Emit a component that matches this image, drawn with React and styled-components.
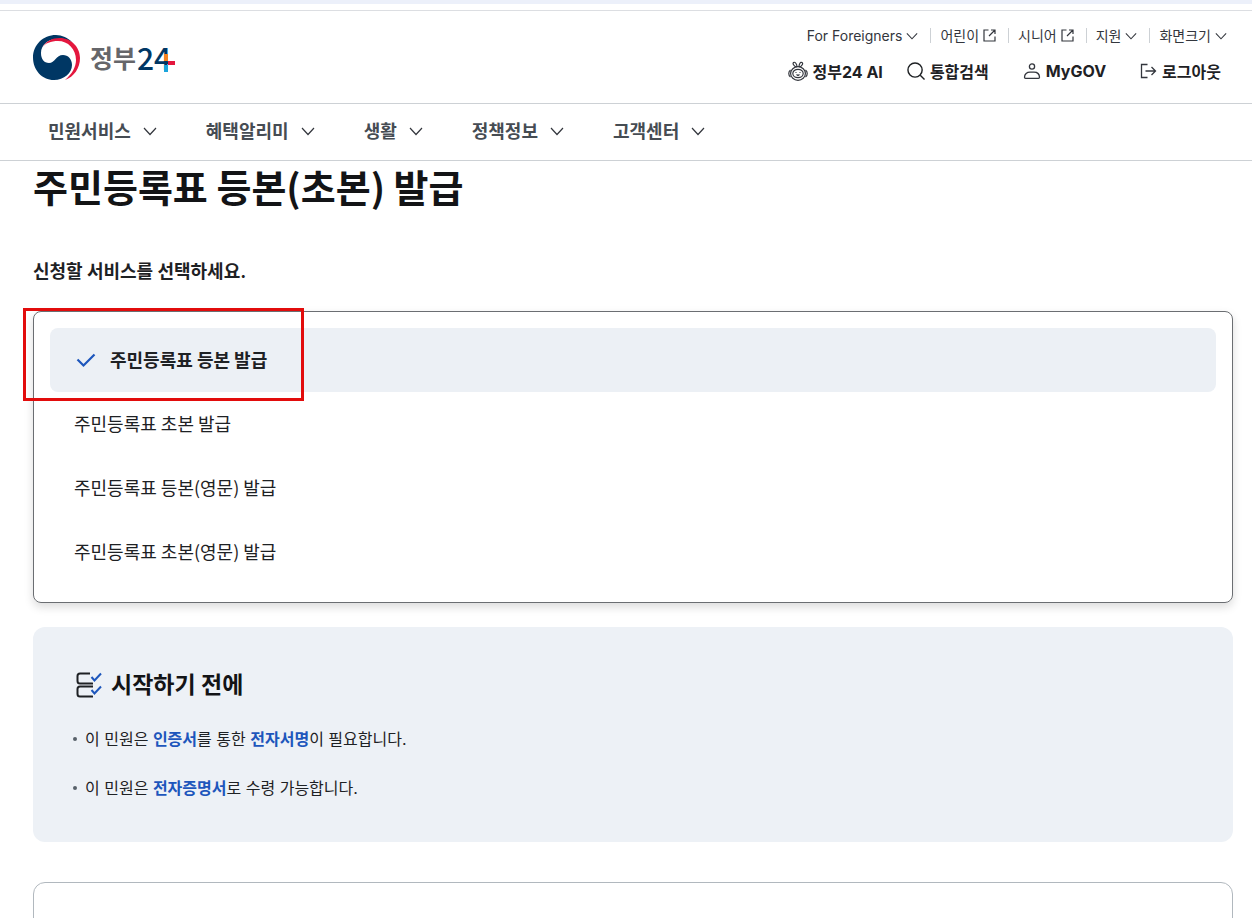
import { useState } from "react";
import styled, { createGlobalStyle } from "styled-components";

const GlobalStyle = createGlobalStyle`
  *, *::before, *::after {
    box-sizing: border-box;
  }
  body {
    margin: 0;
    background: #fff;
    color: #1e2124;
    font-family: "Inter", "Noto Sans CJK KR", sans-serif;
    font-size: 16px;
  }
  button {
    font: inherit;
    color: inherit;
    background: none;
    border: 0;
    padding: 0;
    cursor: pointer;
  }
  a {
    color: inherit;
    text-decoration: none;
  }
  ul {
    list-style: none;
    margin: 0;
    padding: 0;
  }
  svg {
    display: block;
    flex: none;
  }
`;

const Page = styled.div`
  height: 100vh;
  overflow: hidden;
`;

const TopStrip = styled.div`
  height: 11px;
  border-top: 4px solid #ecf0fa;
  border-bottom: 1px solid #dcdee2;
`;

const Header = styled.header`
  display: flex;
  justify-content: space-between;
  height: 93px;
  padding: 0 25px 0 33px;
  border-bottom: 1px solid #cdd1d5;
`;

const LogoLink = styled.a`
  display: flex;
  align-items: center;
  padding-top: 2px;
`;

const HeaderMenus = styled.div`
  display: flex;
  flex-direction: column;
  align-items: flex-end;
  gap: 12px;
  padding-top: 13px;
`;

const UtilList = styled.ul`
  display: flex;
  align-items: center;
`;

const UtilItem = styled.li`
  display: flex;
  align-items: center;

  & + &::before {
    content: "";
    width: 1px;
    height: 15px;
    margin: 0 9px 0 12px;
    background: #cdd1d5;
  }
`;

const UtilButton = styled.button`
  display: flex;
  align-items: center;
  gap: 4px;
  height: 22px;
  font-size: 14px;
  color: #33363d;
`;

const MainList = styled.ul`
  display: flex;
  padding-right: 6px;
`;

const MainItem = styled.li`
  margin-left: ${({ $tight }) => ($tight ? 24 : 34)}px;
`;

const MainButton = styled.button`
  display: flex;
  align-items: center;
  gap: 5px;
  height: 26px;
  font-size: 16px;
  font-weight: 700;
`;

const Nav = styled.nav`
  height: 57px;
  padding: 0 48px;
  border-bottom: 1px solid #cdd1d5;
`;

const NavList = styled.ul`
  display: flex;
  gap: 49px;
`;

const NavButton = styled.button`
  display: flex;
  align-items: center;
  gap: 12px;
  height: 52px;
  font-size: 18px;
  font-weight: 700;
  color: #464c53;
`;

const Main = styled.main`
  padding: 0 19px 0 33px;
`;

const Title = styled.h1`
  margin: 0;
  font-family: "Noto Sans CJK KR", sans-serif;
  font-size: 38px;
  line-height: 50px;
  font-weight: 700;
  color: #131416;
`;

const Question = styled.h2`
  margin: 47px 0 25px;
  font-size: 18px;
  line-height: 28px;
  font-weight: 700;
`;

const SelectBox = styled.div`
  position: relative;
  padding: 16px 16px 18px;
  border: 1px solid #6b6e72;
  border-radius: 8px;
  box-shadow: 0 4px 10px rgba(0, 0, 0, 0.14);
`;

const Highlight = styled.div`
  position: absolute;
  top: -4px;
  left: -11px;
  width: 281px;
  height: 93px;
  border: 3px solid #e20c0c;
  pointer-events: none;
`;

const Option = styled.button`
  display: flex;
  align-items: center;
  gap: 12px;
  width: 100%;
  height: 64px;
  padding: 0 24px 2px;
  border-radius: 8px;
  font-family: "Noto Sans CJK KR", sans-serif;
  font-size: 18px;
  text-align: left;
  font-weight: ${({ $selected }) => ($selected ? 700 : 400)};
  background: ${({ $selected }) => ($selected ? "#ecf0f5" : "transparent")};
`;

const InfoBox = styled.section`
  margin-top: 24px;
  padding: 41px 40px;
  border-radius: 12px;
  background: #edf1f6;
`;

const InfoTitle = styled.h2`
  display: flex;
  align-items: center;
  gap: 8px;
  margin: 0 0 24px;
  font-size: 23px;
  line-height: 34px;
  font-weight: 700;
  color: #131416;
`;

const InfoList = styled.ul`
  display: flex;
  flex-direction: column;
  gap: 23px;
`;

const InfoItem = styled.li`
  display: flex;
  align-items: center;
  gap: 8px;
  line-height: 26px;

  &::before {
    content: "";
    width: 4px;
    height: 4px;
    border-radius: 50%;
    background: #58616a;
  }
`;

const Strong = styled.strong`
  font-weight: 700;
  color: #1d56bc;
`;

const NextCard = styled.section`
  height: 160px;
  margin-top: 40px;
  border: 1px solid #b1b8be;
  border-radius: 12px;
`;

const Logo = () => (
  <svg width="144" height="48" viewBox="0 0 144 48" role="img" aria-label="정부24">
    <path
      d="M39 8C35 4 29 1 23 1C10 1 0 11 0 23.500C0 36 9 46 21 46C31 46 39 39 39 31C39 25 35 21 30 21C23 21 22 29 16 29C11 29 8 25 8 19C8 11 15 5 24 5C30 5 35 6 39 8Z"
      fill="#003764"
    />
    <path
      d="M9 14C13 7 19 4 27 4C38 4 47 13 47 24C47 34 41 43 32 46C39 40 43 33 43 26C43 15 35 7 25 7C18 7 12 9 9 14Z"
      fill="#e4173e"
    />
    <text x="57" y="34" fontFamily="Noto Sans CJK KR" fontSize="25" fontWeight="700" fill="#65666a">정부</text>
    <text x="104" y="36" fontFamily="Noto Sans CJK KR" fontSize="30" fontWeight="500" fill="#003764">24</text>
    <path d="M131 20H135V27H131Z" fill="#f5821f" />
    <path d="M135 27H142V31H135Z" fill="#e4173e" />
    <path d="M131 31H135V38H131Z" fill="#1ba5dc" />
  </svg>
);

const Chevron = ({ size = 12, stroke = "#33363d" }) => (
  <svg width={size} height={size} viewBox="0 0 14 14" fill="none" stroke={stroke} strokeWidth="1.200">
    <path d="M1 5L7 11.500L13 5" />
  </svg>
);

const ExternalIcon = () => (
  <svg width="13" height="13" viewBox="0 0 13 13" fill="none" stroke="#33363d" strokeWidth="1.200">
    <path d="M5.500 1H1V12H12V7.500M8 1H12V5M12 1L6 7" />
  </svg>
);

const BotIcon = () => (
  <svg width="20" height="20" viewBox="0 0 20 20" fill="none" stroke="#33363d" strokeWidth="1.200">
    <ellipse cx="10" cy="12.500" rx="7.400" ry="6.800" />
    <ellipse cx="10" cy="12.500" rx="5.200" ry="4.200" />
    <path d="M8.500 6C5.500 5 4.500 2.500 5.500 1.500C7 0.500 9 3 9 6M11 6C11 3 12.500 0.500 14 1.500C15.500 2.500 14 5 11.500 6" />
    <path d="M2.500 9C0.200 10.500 0.200 14.500 2.500 16M17.500 9C19.800 10.500 19.800 14.500 17.500 16" />
    <path d="M7.500 11.500H8.500M11.500 11.500H12.500M8.500 13.500L10 14.500L11.500 13.500" />
  </svg>
);

const SearchIcon = () => (
  <svg width="18" height="18" viewBox="0 0 19 19" fill="none" stroke="#1e2124" strokeWidth="1.500">
    <circle cx="8.500" cy="8.500" r="7.500" />
    <path d="M14 14L18.500 18.500" />
  </svg>
);

const PersonIcon = () => (
  <svg width="18" height="18" viewBox="0 0 18 18" fill="none" stroke="#33363d" strokeWidth="1.300">
    <circle cx="9" cy="4.500" r="2.600" />
    <path d="M2.500 16.300H15.500C16.200 16.300 16.500 16 16.500 15.300C16.500 12 14 10.200 11 10.200H7C4 10.200 1.500 12 1.500 15.300C1.500 16 1.800 16.300 2.500 16.300Z" />
  </svg>
);

const LogoutIcon = () => (
  <svg width="17" height="16" viewBox="0 0 17 16" fill="none" stroke="#33363d" strokeWidth="1.300">
    <path d="M7.500 1.500H1.500V14.500H7.500M5.500 8H15.500M11.500 4L15.500 8L11.500 12" />
  </svg>
);

const CheckIcon = () => (
  <svg width="24" height="24" viewBox="0 0 24 24" fill="none" stroke="#1d56bc" strokeWidth="2.200">
    <path d="M3.500 12.500L9.500 18.500L20.500 7.500" />
  </svg>
);

const ChecklistIcon = () => (
  <svg width="30" height="30" viewBox="0 0 30 30" fill="none" strokeWidth="2">
    <path d="M17 3.500H7C5.500 3.500 4.500 4.500 4.500 6V11C4.500 12.500 5.500 13.500 7 13.500H20" stroke="#1e2124" />
    <path d="M20 16.500H7C5.500 16.500 4.500 17.500 4.500 19V24C4.500 25.500 5.500 26.500 7 26.500H20" stroke="#1e2124" />
    <path d="M18.500 7L21.500 10.500L28 3.500M18.500 20L21.500 23.500L28 16.500" stroke="#edf1f6" strokeWidth="5" />
    <path d="M18.500 7L21.500 10.500L28 3.500M18.500 20L21.500 23.500L28 16.500" stroke="#1d56bc" />
  </svg>
);

const utilLinks = [
  { label: "For Foreigners", Icon: Chevron },
  { label: "어린이", Icon: ExternalIcon },
  { label: "시니어", Icon: ExternalIcon },
  { label: "지원", Icon: Chevron },
  { label: "화면크기", Icon: Chevron },
];

const mainLinks = [
  { label: "정부24 AI", Icon: BotIcon },
  { label: "통합검색", Icon: SearchIcon, tight: true },
  { label: "MyGOV", Icon: PersonIcon },
  { label: "로그아웃", Icon: LogoutIcon },
];

const navLinks = ["민원서비스", "혜택알리미", "생활", "정책정보", "고객센터"];

const services = [
  "주민등록표 등본 발급",
  "주민등록표 초본 발급",
  "주민등록표 등본(영문) 발급",
  "주민등록표 초본(영문) 발급",
];

const App = () => {
  const [selected, setSelected] = useState(0);

  return (
    <Page>
      <GlobalStyle />
      <TopStrip />
      <Header>
        <LogoLink href="#">
          <Logo />
        </LogoLink>
        <HeaderMenus>
          <UtilList>
            {utilLinks.map(({ label, Icon }) => (
              <UtilItem key={label}>
                <UtilButton type="button">
                  {label}
                  <Icon />
                </UtilButton>
              </UtilItem>
            ))}
          </UtilList>
          <MainList>
            {mainLinks.map(({ label, Icon, tight }) => (
              <MainItem key={label} $tight={tight}>
                <MainButton type="button">
                  <Icon />
                  {label}
                </MainButton>
              </MainItem>
            ))}
          </MainList>
        </HeaderMenus>
      </Header>
      <Nav>
        <NavList>
          {navLinks.map((label) => (
            <li key={label}>
              <NavButton type="button">
                {label}
                <Chevron size={14} />
              </NavButton>
            </li>
          ))}
        </NavList>
      </Nav>
      <Main>
        <Title>주민등록표 등본(초본) 발급</Title>
        <Question>신청할 서비스를 선택하세요.</Question>
        <SelectBox>
          <ul>
            {services.map((service, index) => (
              <li key={service}>
                <Option
                  type="button"
                  $selected={index === selected}
                  aria-pressed={index === selected}
                  onClick={() => setSelected(index)}
                >
                  {index === selected && <CheckIcon />}
                  {service}
                </Option>
              </li>
            ))}
          </ul>
          <Highlight />
        </SelectBox>
        <InfoBox>
          <InfoTitle>
            <ChecklistIcon />
            시작하기 전에
          </InfoTitle>
          <InfoList>
            <InfoItem>
              <span>
                이 민원은 <Strong>인증서</Strong>를 통한 <Strong>전자서명</Strong>이 필요합니다.
              </span>
            </InfoItem>
            <InfoItem>
              <span>
                이 민원은 <Strong>전자증명서</Strong>로 수령 가능합니다.
              </span>
            </InfoItem>
          </InfoList>
        </InfoBox>
        <NextCard />
      </Main>
    </Page>
  );
};

export default App;
